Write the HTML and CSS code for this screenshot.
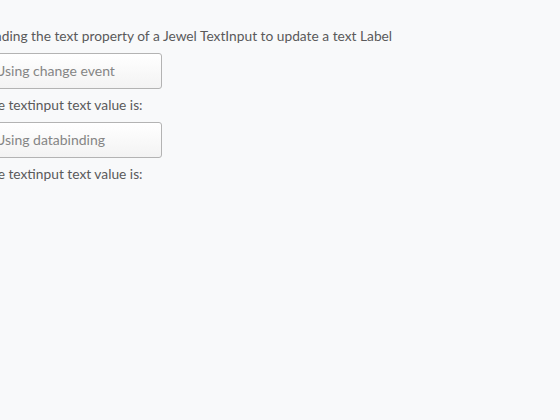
FILE: index.html
```html
<!DOCTYPE html>
<html>
<head>
<meta charset="utf-8">
<link rel="stylesheet" href="styles.css">
</head>
<body>
<div class="app">
  <div class="group">
    <span class="heading">Binding the text property of a Jewel TextInput to update a text Label</span>
    <div class="input">Using change event</div>
    <span class="label">The textinput text value is:</span>
    <div class="input">Using databinding</div>
    <span class="label">The textinput text value is:</span>
  </div>
</div>
</body>
</html>
```
FILE: styles.css
```css
html, body {
  margin: 0;
  padding: 0;
  background: #f8f9fa;
  height: 100%;
}
.app {
  font-family: Lato, "Open Sans", sans-serif;
  font-size: 13.75px;
  color: #5a5a5a;
  margin-left: -18px;
  padding-top: 27px;
}
.group {
  display: flex;
  flex-direction: column;
  align-items: flex-start;
}
.heading {
  line-height: 18px;
  margin-bottom: 8px;
}
.input {
  box-sizing: border-box;
  width: 180px;
  height: 36px;
  padding-left: 12px;
  font-size: 14px;
  line-height: 34px;
  color: #858585;
  border: 1px solid #b3b3b3;
  border-radius: 3px;
  background: linear-gradient(#ffffff, #f3f3f3);
}
.label {
  line-height: 18px;
  margin: 7px 0 8px;
}
```
